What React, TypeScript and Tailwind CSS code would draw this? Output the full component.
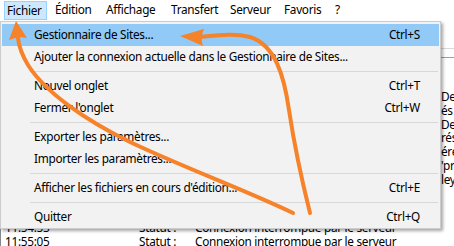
import React from 'react'

type Item = { label: string; keys?: string; active?: boolean } | 'sep'

const menuItems: Item[] = [
  { label: 'Gestionnaire de Sites...', keys: 'Ctrl+S', active: true },
  { label: 'Ajouter la connexion actuelle dans le Gestionnaire de Sites...' },
  'sep',
  { label: 'Nouvel onglet', keys: 'Ctrl+T' },
  { label: "Fermer l'onglet", keys: 'Ctrl+W' },
  'sep',
  { label: 'Exporter les paramètres...' },
  { label: 'Importer les paramètres...' },
  'sep',
  { label: "Afficher les fichiers en cours d'édition...", keys: 'Ctrl+E' },
  'sep',
  { label: 'Quitter', keys: 'Ctrl+Q' },
]

const fragments = ['Des', 'és e', 'Des', 'rés', 'éré', "'pr", 'ley']

const logLines = [
  { time: '11:54:53', type: 'Statut :', msg: 'Connexion interrompue par le serveur' },
  { time: '11:55:05', type: 'Statut :', msg: 'Connexion interrompue par le serveur' },
]

function MenuBar() {
  return (
    <div className="h-[20px] flex items-stretch bg-white text-black">
      <span className="ml-[4px] mt-[1px] w-[43px] pl-[2px] flex items-center bg-[#cce8ff] border border-[#99d1ff]">
        Fichier
      </span>
      <span className="ml-[8px] w-[51px] flex items-center">Édition</span>
      <span className="w-[65px] flex items-center">Affichage</span>
      <span className="w-[59px] flex items-center">Transfert</span>
      <span className="w-[54px] flex items-center">Serveur</span>
      <span className="w-[51px] flex items-center">Favoris</span>
      <span className="flex items-center">?</span>
    </div>
  )
}

function FileMenu() {
  return (
    <div className="absolute left-0 top-[21px] w-[441px] bg-[#f2f2f2] border border-[#cccccc] px-[1px] pt-[2px] shadow-[2px_2px_3px_rgba(0,0,0,0.35)]">
      {menuItems.map((item, i) =>
        item === 'sep' ? (
          <div key={i} className="h-[7px] flex items-center">
            <div className="ml-[28px] mr-[1px] h-px flex-1 bg-[#d7d7d7]" />
          </div>
        ) : (
          <div
            key={i}
            className={
              'h-[22px] flex items-center justify-between pl-[32px] pr-[19px] text-black ' +
              (item.active ? 'bg-[#91c9f7]' : '')
            }
          >
            <span>{item.label}</span>
            {item.keys && <span>{item.keys}</span>}
          </div>
        )
      )}
    </div>
  )
}

function Arrows() {
  const c = '#f6822a'
  return (
    <svg className="absolute left-0 top-0 pointer-events-none" width="454" height="246" viewBox="0 0 454 246">
      <path
        d="M293 213 C250 192 180 166 130 142 C85 120 45 92 28 65 C22 55 19 48 18 38"
        fill="none"
        stroke={c}
        strokeWidth="4"
        strokeLinecap="round"
      />
      <path d="M16 21 L27 38 Q18 36 9 40 Z" fill={c} />
      <path
        d="M310 213 C303 185 295 150 289 110 C284 75 275 45 250 37 C235 33 220 35 200 37"
        fill="none"
        stroke={c}
        strokeWidth="4"
        strokeLinecap="round"
      />
      <path d="M180 36 L204 29 Q200 37 203 46 Z" fill={c} />
    </svg>
  )
}

export default function App() {
  return (
    <div className="relative w-[454px] h-[246px] overflow-hidden bg-white font-['Noto_Sans',sans-serif] text-[11.8px] tracking-[-0.3px] leading-none">
      <MenuBar />
      <div className="h-[29px] border-b border-[#d9d9d9]" />
      <div className="h-[9px] border-b border-[#a0a0a0]" />
      <div className="flex flex-col pt-[32px] border-l border-[#828790]">
        {fragments.map((f) => (
          <div key={f} className="h-[13.8px] flex items-center">
            <span className="w-[440px] shrink-0" />
            <span className="whitespace-nowrap">{f}</span>
          </div>
        ))}
        <div className="mt-[34px]">
          {logLines.map((l) => (
            <div key={l.time} className="h-[14px] flex items-center whitespace-nowrap">
              <span className="w-[138px] pl-[4px]">{l.time}</span>
              <span className="w-[56px]">{l.type}</span>
              <span>{l.msg}</span>
            </div>
          ))}
        </div>
      </div>
      <FileMenu />
      <Arrows />
    </div>
  )
}
